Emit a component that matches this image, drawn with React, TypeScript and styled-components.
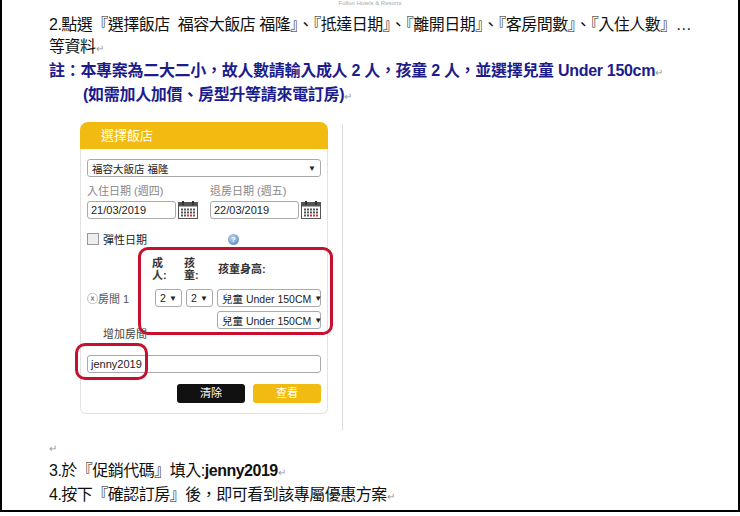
import React from "react";
import styled, { createGlobalStyle } from "styled-components";

const G = createGlobalStyle`
  html,body{margin:0;padding:0;background:#fff;}
  body{font-family:"Liberation Sans","Noto Sans CJK TC",sans-serif;}
`;
const Page = styled.div`
  width:736px;height:510px;border:2px solid #000;border-top:none;position:relative;overflow:hidden;background:#fff;
`;
const Running = styled.div`
  text-align:center;font-size:6px;color:#aaa;height:6px;line-height:6px;
`;
const Doc = styled.div`
  padding:8px 0 0 47px;color:#111;
`;
const P = styled.div<{ $blue?: boolean; $indent?: number }>`
  font-size:16px;line-height:22px;
  font-weight:${p => (p.$blue ? 700 : 400)};
  color:${p => (p.$blue ? "#1c1c8c" : "#111")};
  padding-left:${p => p.$indent || 0}px;white-space:nowrap;
  letter-spacing:${p => (p.$blue ? "-0.3px" : "-0.5px")};
`;
const Mark = styled.span`color:#999;font-size:10px;font-weight:400;`;
const Area = styled.div`
  display:flex;margin:14px 0 0 78px;height:308px;
`;
const Widget = styled.div`width:248px;`;
const Head = styled.div`
  background:#f2bb12;border-radius:8px 8px 0 0;height:27px;color:#fff;font-size:13px;line-height:27px;padding-left:21px;
`;
const Body = styled.div`
  border:1px solid #e2e2e2;border-top:none;border-radius:0 0 6px 6px;padding:10px 6px 12px 6px;height:242px;position:relative;
  font-size:11px;color:#222;
`;
const Sel = styled.div<{ $w?: number }>`
  height:18px;border:1px solid #aaa;border-radius:3px;display:flex;align-items:center;justify-content:space-between;
  padding:0 4px;box-sizing:border-box;width:${p => (p.$w ? p.$w + "px" : "100%")};font-size:10.5px;background:#fff;white-space:nowrap;
  &::after{content:"▼";font-size:8px;margin-left:3px;}
`;
const Row = styled.div<{ $gap?: number; $mt?: number }>`
  display:flex;gap:${p => p.$gap ?? 12}px;margin-top:${p => p.$mt ?? 0}px;align-items:center;
`;
const Col = styled.div`display:flex;flex-direction:column;gap:3px;`;
const Lbl = styled.div`color:#888;font-size:11px;`;
const Inp = styled.div<{ $w: number }>`
  width:${p => p.$w}px;height:18px;border:1px solid #aaa;border-radius:3px;box-sizing:border-box;padding:0 3px;line-height:16px;font-size:11px;
`;
const Cal = () => (
  <svg width="20" height="18" viewBox="0 0 20 18">
    <rect x="0.5" y="1.5" width="19" height="16" fill="#fff" stroke="#555" />
    <rect x="0.5" y="1.5" width="19" height="4" fill="#555" />
    <rect x="4" y="0" width="2" height="4" fill="#333" /><rect x="14" y="0" width="2" height="4" fill="#333" />
    {[0, 1, 2].map(r => [0, 1, 2, 3, 4].map(c => (
      <rect key={r + "-" + c} x={3 + c * 3} y={7.5 + r * 3} width="2" height="2" fill={r === 2 && c > 1 ? "#c33" : "#555"} />
    )))}
  </svg>
);
const Check = styled.span`display:inline-block;width:10px;height:10px;border:1px solid #999;background:#eee;`;
const Help = styled.span`
  display:inline-block;width:11px;height:11px;border-radius:50%;background:radial-gradient(circle at 40% 35%,#bcd3f0,#4a7ac0);color:#fff;font-size:8px;text-align:center;line-height:11px;font-weight:700;margin-left:77px;
`;
const Th = styled.div<{ $w: number }>`width:${p => p.$w}px;font-size:11px;line-height:12px;font-weight:700;color:#333;`;
const Room = styled.span`width:64px;color:#555;`;
const AddRoom = styled.div`padding-left:16px;margin-top:-4px;color:#444;`;
const Btn = styled.div<{ $y?: boolean }>`
  width:68px;height:19px;border-radius:3px;background:${p => (p.$y ? "#f2bb12" : "#111")};color:#fff;font-size:11px;text-align:center;line-height:19px;
`;
const Ring = styled.div<{ $x: number; $y: number; $w: number; $h: number }>`
  position:absolute;left:${p => p.$x}px;top:${p => p.$y}px;width:${p => p.$w}px;height:${p => p.$h}px;
  border:3px solid #c8102e;border-radius:10px;box-sizing:border-box;
`;
const VLine = styled.div`width:1px;background:#ddd;margin:2px 0 0 14px;height:306px;`;

export default function App() {
  return (
    <Page>
      <G />
      <Running>Fullon Hotels &amp; Resorts</Running>
      <Doc>
        <P>2.點選『選擇飯店&nbsp; 福容大飯店 福隆』、『抵達日期』、『離開日期』、『客房間數』、『入住人數』…</P>
        <P>等資料<Mark>↵</Mark></P>
        <P $blue>註：本專案為二大二小，故人數請輸入成人 2 人，孩童 2 人，並選擇兒童 Under 150cm<Mark>↵</Mark></P>
        <P $blue $indent={34}>(如需加人加價、房型升等請來電訂房)<Mark>↵</Mark></P>
      </Doc>
      <Area>
        <Widget>
          <Head>選擇飯店</Head>
          <Body>
            <Sel>福容大飯店 福隆</Sel>
            <Row $gap={12} $mt={5}>
              <Col><Lbl>入住日期 (週四)</Lbl><Row $gap={2}><Inp $w={89}>21/03/2019</Inp><Cal /></Row></Col>
              <Col><Lbl>退房日期 (週五)</Lbl><Row $gap={2}><Inp $w={89}>22/03/2019</Inp><Cal /></Row></Col>
            </Row>
            <Row $gap={4} $mt={12}><Check />彈性日期<Help>?</Help></Row>
            <Row $gap={0} $mt={10} style={{ paddingLeft: 65 }}>
              <Th $w={32}>成<br />人:</Th><Th $w={34}>孩<br />童:</Th><Th $w={80}>孩童身高:</Th>
            </Row>
            <Row $gap={4} $mt={8}>
              <Room>ⓧ房間 1</Room>
              <Sel $w={27}>2</Sel><Sel $w={27}>2</Sel><Sel $w={104}>兒童 Under 150CM</Sel>
            </Row>
            <Row $gap={0} $mt={4} style={{ paddingLeft: 130 }}><Sel $w={104}>兒童 Under 150CM</Sel></Row>
            <AddRoom>增加房間</AddRoom>
            <Row $mt={14}><Inp $w={234}>jenny2019</Inp></Row>
            <Row $gap={8} $mt={11} style={{ justifyContent: "flex-end" }}><Btn>清除</Btn><Btn $y>查看</Btn></Row>
            <Ring $x={57} $y={98} $w={195} $h={88} />
            <Ring $x={-6} $y={194} $w={73} $h={37} />
          </Body>
        </Widget>
        <VLine />
      </Area>
      <Doc style={{ paddingTop: 6 }}>
        <P><Mark>↵</Mark></P>
        <P>3.於『促銷代碼』填入:<b>jenny2019</b><Mark>↵</Mark></P>
        <P>4.按下『確認訂房』後，即可看到該專屬優惠方案<Mark>↵</Mark></P>
      </Doc>
    </Page>
  );
}
